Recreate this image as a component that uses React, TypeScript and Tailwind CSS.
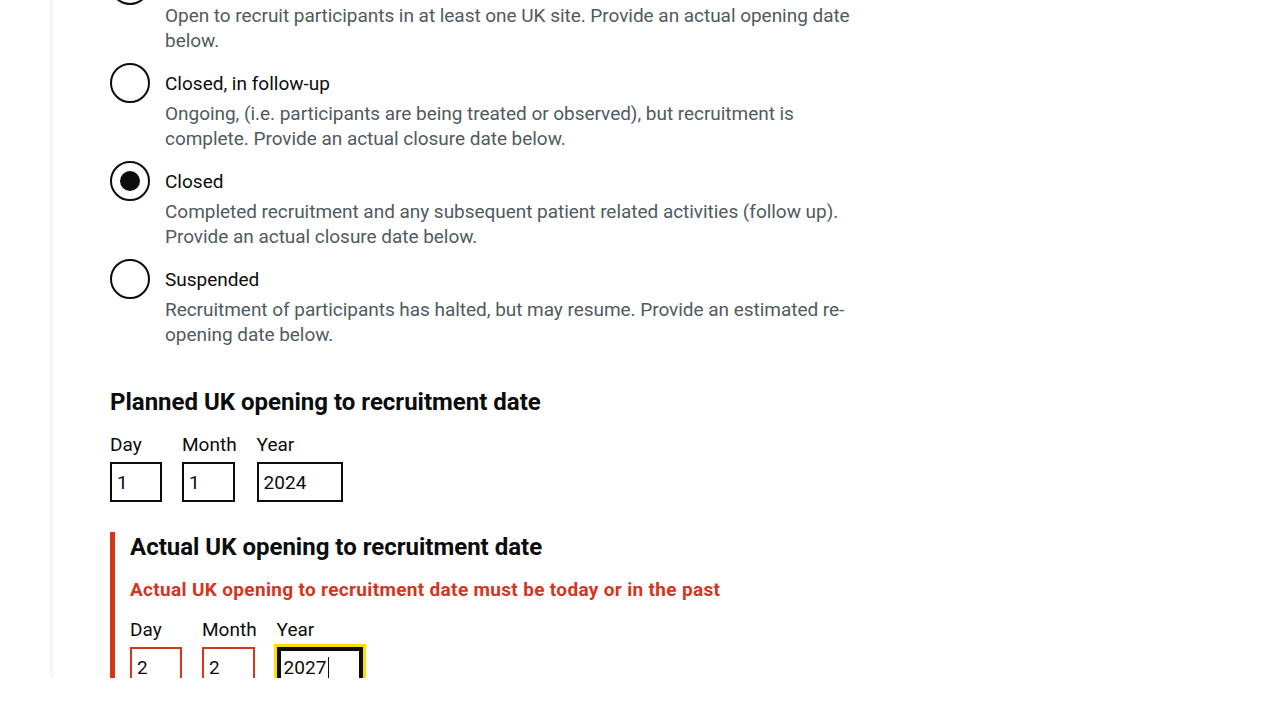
import React from 'react';

const font = { fontFamily: 'Roboto, "Liberation Sans", Arial, sans-serif' };

const statuses = [
  {
    label: 'Open, actively recruiting',
    hint: 'Open to recruit participants in at least one UK site. Provide an actual opening date below.',
    checked: false,
  },
  {
    label: 'Closed, in follow-up',
    hint: 'Ongoing, (i.e. participants are being treated or observed), but recruitment is complete. Provide an actual closure date below.',
    checked: false,
  },
  {
    label: 'Closed',
    hint: 'Completed recruitment and any subsequent patient related activities (follow up). Provide an actual closure date below.',
    checked: true,
  },
  {
    label: 'Suspended',
    hint: 'Recruitment of participants has halted, but may resume. Provide an estimated re-opening date below.',
    checked: false,
  },
];

const RadioItem = ({ label, hint, checked }: { label: string; hint: string; checked: boolean }) => (
  <div className="flex mb-[10px] last:mb-0">
    <div className="w-10 h-10 shrink-0 rounded-full border-2 border-[#0b0c0c] flex items-center justify-center">
      {checked && <div className="w-5 h-5 rounded-full bg-[#0b0c0c]" />}
    </div>
    <div className="flex-1">
      <div className="pt-[8px] pb-[5px] px-[15px] text-[19px] leading-[25px] text-[#0b0c0c]">{label}</div>
      <div className="px-[15px] text-[19px] leading-[25px] tracking-[-0.035px] text-[#505a5f]">{hint}</div>
    </div>
  </div>
);

type Part = { label: string; value: string; width: string };

const DateInput = ({ parts, error, focusLast }: { parts: Part[]; error?: boolean; focusLast?: boolean }) => (
  <div className="flex gap-[20px]">
    {parts.map((p, i) => {
      const isFocused = focusLast && i === parts.length - 1;
      return (
        <div key={p.label} className="flex flex-col">
          <label className="text-[19px] leading-[25px] text-[#0b0c0c] mb-[5px]">{p.label}</label>
          <div className="relative">
            <input
              defaultValue={p.value}
              style={font}
              className={`${p.width} h-10 px-[5px] pt-[1px] border-2 text-[19px] text-[#0b0c0c] bg-white rounded-none ${
                isFocused
                  ? 'caret-transparent border-[#0b0c0c] outline-[3px] outline-solid outline-[#ffdd00] outline-offset-0 shadow-[inset_0_0_0_2px_#0b0c0c]'
                  : error
                  ? 'border-[#d4351c] outline-none'
                  : 'border-[#0b0c0c] outline-none'
              }`}
            />
            {/* text caret */}
            {isFocused && <span className="absolute left-[51px] top-[10px] w-px h-[22px] bg-[#0b0c0c]" />}
          </div>
        </div>
      );
    })}
  </div>
);

export default function App() {
  return (
    <div style={font} className="bg-white h-[720px]">
      <div className="h-[678px] overflow-hidden">
        <div className="ml-[50px] h-full pl-[60px] pt-px shadow-[inset_4px_0_4px_-2px_rgba(0,0,0,0.07)]">
          <div className="w-[760px] -mt-[36px]">
            {/* Recruitment status radios */}
            <div className="mb-[40px]">
              {statuses.map((s) => (
                <RadioItem key={s.label} {...s} />
              ))}
            </div>

            {/* Planned date */}
            <div className="mb-[30px]">
              <h2 className="text-[24px] leading-[30px] font-bold text-[#0b0c0c] mb-[15px]">
                Planned UK opening to recruitment date
              </h2>
              <DateInput
                parts={[
                  { label: 'Day', value: '1', width: 'w-[52px]' },
                  { label: 'Month', value: '1', width: 'w-[53px]' },
                  { label: 'Year', value: '2024', width: 'w-[86px]' },
                ]}
              />
            </div>

            {/* Actual date with error */}
            <div className="border-l-[5px] border-[#d4351c] pl-[15px]">
              <h2 className="text-[24px] leading-[30px] font-bold text-[#0b0c0c] mb-[15px]">
                Actual UK opening to recruitment date
              </h2>
              <p className="text-[19px] leading-[25px] font-bold tracking-[0.33px] text-[#d4351c] mb-[15px]">
                Actual UK opening to recruitment date must be today or in the past
              </p>
              <DateInput
                error
                focusLast
                parts={[
                  { label: 'Day', value: '2', width: 'w-[52px]' },
                  { label: 'Month', value: '2', width: 'w-[53px]' },
                  { label: 'Year', value: '2027', width: 'w-[86px]' },
                ]}
              />
              <div className="h-[30px]" />
            </div>
          </div>
        </div>
      </div>
    </div>
  );
}
